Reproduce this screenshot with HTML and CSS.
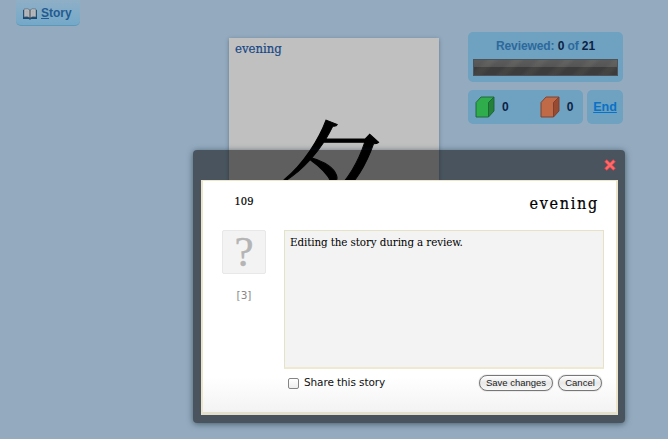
FILE: index.html
```html
<!DOCTYPE html>
<html lang="en">
<head>
<meta charset="utf-8">
<title>Review</title>
<link rel="stylesheet" href="styles.css">
</head>
<body>
<main class="page">
  <a class="story-button"><svg class="book" width="14" height="12" viewBox="0 0 14 12"><path d="M0 2h14v9H8L7 12 6 11H0z" fill="#174a73"/><path d="M1 1q4-1 6 1 2-2 6-1v8q-4-1-6 1-2-2-6-1z" fill="#b9bdc0" stroke="#51606e" stroke-width=".6"/><path d="M7 2v8" stroke="#38434d"/><path d="M2.500 3.200h3M2.500 5h3M2.500 7h3M8.500 3.200h3M8.500 5h3M8.500 7h3" stroke="#9a9fa3" stroke-width=".6"/></svg><span><u>S</u>tory</span></a>
  <section class="card">
    <div class="keyword">evening</div>
    <div class="kanji" lang="ja">夕</div>
  </section>
  <aside class="stats">
    <div class="panel reviewed">
      <div class="label">Reviewed: <b>0</b> of <b>21</b></div>
      <div class="bar"></div>
    </div>
    <div class="row">
      <div class="panel counts">
        <svg width="20" height="22" viewBox="0 0 20 22"><path d="M1 6.500 6 1h13v14l-5.500 6H1z" fill="#2fac4c"/><path d="M13.500 6.500 19 1v14l-5.500 6z" fill="#24813a"/><path d="M1 6.500 6 1h13v14l-5.500 6H1zM13.500 6.500 19 1M13.500 6.500V21" fill="none" stroke="#1d6335" stroke-width=".9"/></svg>
        <b>0</b>
        <svg class="red" width="20" height="22" viewBox="0 0 20 22"><path d="M1 6.500 6 1h13v14l-5.500 6H1z" fill="#c06a48"/><path d="M13.500 6.500 19 1v14l-5.500 6z" fill="#984b30"/><path d="M1 6.500 6 1h13v14l-5.500 6H1zM13.500 6.500 19 1M13.500 6.500V21" fill="none" stroke="#7c3d2d" stroke-width=".9"/></svg>
        <b>0</b>
      </div>
      <a class="panel end">End</a>
    </div>
  </aside>
</main>
<div class="dialog">
  <div class="titlebar"><svg width="12" height="12" viewBox="0 0 12 12"><path d="M1.500 1.500l9 9M10.500 1.500l-9 9" stroke="#e8454a" stroke-width="3.600"/><path d="M2 2l8 8M10 2l-8 8" stroke="#ff6b6b" stroke-width="2"/></svg></div>
  <div class="content">
    <div class="left">
      <div class="number">109</div>
      <div class="mark">?</div>
      <div class="strokes">[3]</div>
    </div>
    <div class="right">
      <h1>evening</h1>
      <div class="editor"><span>Editing the story during a review.</span></div>
      <div class="actions">
        <span class="check"></span><span class="share">Share this story</span>
        <button class="save">Save changes</button><button class="cancel">Cancel</button>
      </div>
    </div>
  </div>
</div>
</body>
</html>
```
FILE: styles.css
```css
* { box-sizing: border-box; }
body {
  margin: 0;
  width: 668px;
  height: 439px;
  overflow: hidden;
  background: #94abbf;
  font-family: "Liberation Sans", sans-serif;
}
.page { display: flex; align-items: flex-start; height: 439px; }
.story-button {
  display: flex;
  gap: 4px;
  width: 64px;
  height: 26px;
  margin-left: 16px;
  padding: 6px 0 0 7px;
  border-radius: 0 0 5px 5px;
  border-bottom: 1px solid #5f97b9;
  background: linear-gradient(#8fafc6, #74a9c9);
  color: #235b91;
  font-size: 12px;
  font-weight: bold;
  line-height: 14px;
}
.book { margin-top: 2px; flex: none; }
.card {
  width: 210px;
  height: 290px;
  margin: 38px 0 0 149px;
  background: #c0c0c0;
  box-shadow: 0 1px 4px rgba(40, 65, 85, .45);
}
.keyword {
  height: 22px;
  padding: 2px 0 0 6px;
  color: #174785;
  font: 13px/17px "DejaVu Serif Condensed", "DejaVu Serif", serif;
  font-stretch: condensed;
  -webkit-text-stroke: .2px #174785;
}
.kanji {
  margin-top: 45px;
  padding-right: 6px;
  text-align: center;
  color: #000;
  font: 110px/120px "Noto Serif CJK JP", "Noto Sans CJK JP", serif;
  -webkit-text-stroke: 1px #000;
}
.stats { width: 155px; margin: 32px 0 0 29px; color: #0c2445; font-size: 12px; }
.panel { background: #6fa1c1; border-radius: 5px; }
.reviewed { height: 50px; padding: 7px 5px 0; }
.label { height: 20px; line-height: 15px; text-align: center; color: #2c699c; font-weight: bold; letter-spacing: -.1px; }
.label b { color: #0c2445; }
.bar {
  height: 17px;
  border: 1px solid #4d5459;
  background:
    linear-gradient(rgba(255,255,255,.14) 0, rgba(255,255,255,.1) 45%, rgba(0,0,0,.08) 48%, rgba(0,0,0,.08)),
    repeating-linear-gradient(135deg, #414141 0 7px, #4a4a49 11px 14px, #414141 18px);
}
.row { display: flex; gap: 4px; margin-top: 8px; }
.counts { display: flex; align-items: center; width: 115px; height: 34px; padding-left: 7px; }
.counts b { margin-left: 7px; }
.counts .red { margin-left: 31px; }
.end { width: 36px; height: 34px; line-height: 34px; text-align: center; font-weight: bold; font-size: 12.500px; color: #0872c6; text-decoration: underline; }
.dialog {
  position: absolute;
  left: 193px;
  top: 150px;
  width: 432px;
  height: 273px;
  padding: 0 7px 8px 8px;
  border-radius: 4px;
  background: rgba(0, 0, 0, .505);
  box-shadow: 0 1px 6px rgba(20, 40, 55, .6);
}
.titlebar { display: flex; justify-content: flex-end; height: 30px; padding: 9px 2px 0 0; }
.content {
  display: flex;
  height: 235px;
  border: 1px solid #ece5c9;
  border-left-width: 2px;
  border-right-width: 2px;
  border-bottom: 3px solid #e5e0cb;
  background: linear-gradient(#fff 85%, #f3f3f3);
}
.left { width: 81px; padding-left: 19px; text-align: center; }
.number { width: 44px; height: 48px; padding-top: 12px; font: 11px/17px "DejaVu Serif Condensed", "DejaVu Serif", serif; font-stretch: condensed; -webkit-text-stroke: .2px #000; }
.mark {
  width: 44px;
  height: 44px;
  margin-top: 1px;
  border: 1px solid #e8e8e8;
  border-radius: 2px;
  background: #f3f3f3;
  color: #b4b4b4;
  font: 43px/41px "Liberation Serif", serif;
  -webkit-text-stroke: .4px #b4b4b4;
}
.strokes { width: 44px; margin-top: 13px; color: #888; font: 10.500px/16px "DejaVu Sans", sans-serif; }
.right { width: 320px; }
h1 { height: 49px; margin: 0; padding: 11px 5px 0 0; text-align: right; font: 16px/24px "DejaVu Serif Condensed", "DejaVu Serif", serif; font-stretch: condensed; letter-spacing: 1.700px; -webkit-text-stroke: .2px #000; }
.editor {
  height: 139px;
  padding: 3px 5px;
  border: 1px solid #e5e3c7;
  border-bottom: 2px solid #efe9d2;
  background: #f3f3f3;
  font: 11.500px/17px "DejaVu Serif Condensed", "DejaVu Serif", serif;
  font-stretch: condensed;
  letter-spacing: -.1px;
  white-space: nowrap;
}
.actions { display: flex; align-items: flex-start; padding: 6px 0 0 4px; }
.check { width: 11px; height: 11px; margin-top: 3px; border: 1px solid #858585; border-radius: 2px; background: linear-gradient(#fff, #eee); }
.share { width: 175px; margin-left: 5px; color: #111; font: 10.500px/15px "DejaVu Sans", sans-serif; letter-spacing: -.1px; white-space: nowrap; }
button {
  height: 16px;
  padding: 0;
  border: 1px solid #777;
  border-radius: 8px;
  background: linear-gradient(#fff, #e8e8e8 50%, #f8f8f8);
  box-shadow: 0 0 1px #666;
  color: #222;
  font: 9.500px/12px "Liberation Sans", sans-serif;
  white-space: nowrap;
}
.save { width: 74px; }
.cancel { width: 44px; margin-left: 5px; }
```
